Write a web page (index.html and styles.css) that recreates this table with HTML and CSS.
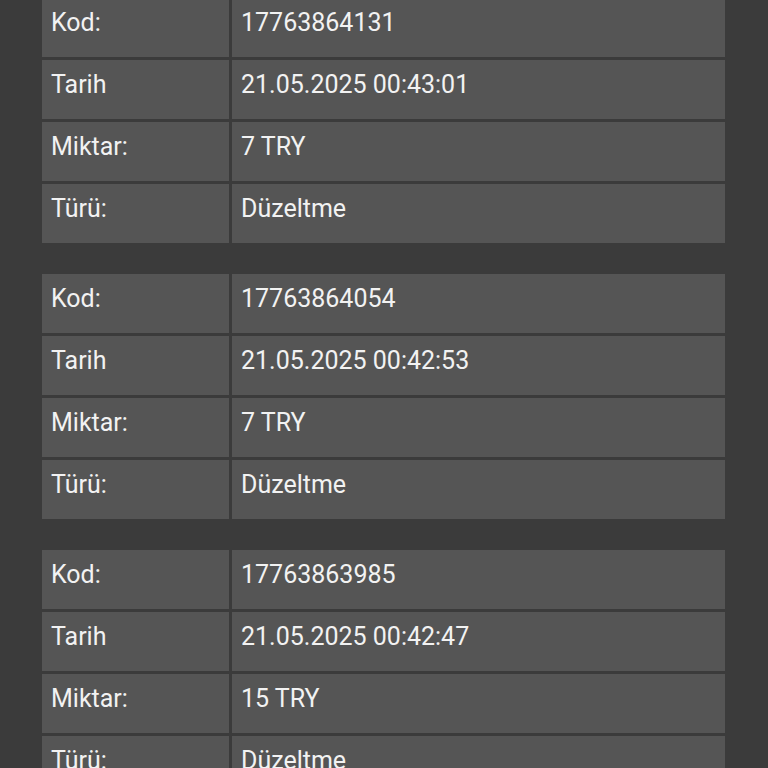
FILE: index.html
```html
<!DOCTYPE html>
<html lang="tr">
<head>
  <meta charset="UTF-8">
  <meta name="viewport" content="width=device-width, initial-scale=1.0">
  <title>İşlem Geçmişi</title>
  <link rel="stylesheet" href="styles.css">
</head>
<body>
  <div class="history">
    <table class="record">
      <tr><td class="label">Kod:</td><td>17763864131</td></tr>
      <tr><td class="label">Tarih</td><td>21.05.2025 00:43:01</td></tr>
      <tr><td class="label">Miktar:</td><td>7 TRY</td></tr>
      <tr><td class="label">Türü:</td><td>Düzeltme</td></tr>
    </table>

    <table class="record">
      <tr><td class="label">Kod:</td><td>17763864054</td></tr>
      <tr><td class="label">Tarih</td><td>21.05.2025 00:42:53</td></tr>
      <tr><td class="label">Miktar:</td><td>7 TRY</td></tr>
      <tr><td class="label">Türü:</td><td>Düzeltme</td></tr>
    </table>

    <table class="record">
      <tr><td class="label">Kod:</td><td>17763863985</td></tr>
      <tr><td class="label">Tarih</td><td>21.05.2025 00:42:47</td></tr>
      <tr><td class="label">Miktar:</td><td>15 TRY</td></tr>
      <tr><td class="label">Türü:</td><td>Düzeltme</td></tr>
    </table>
  </div>
</body>
</html>
```

FILE: styles.css
```css
body {
  margin: 0;
  background: #3b3b3b;
  font-family: Roboto, 'Noto Sans', sans-serif;
  color: #f2f2f2;
  overflow: hidden;
}

.history {
  margin-top: -5px;
}

.record {
  border-collapse: separate;
  border-spacing: 3px;
  table-layout: fixed;
  width: 689px;
  margin: 0 0 25px 39px;
}

.record td {
  background: #555555;
  height: 59px;
  box-sizing: border-box;
  padding: 10px 9px 0;
  vertical-align: top;
  font-size: 25px;
  line-height: 29px;
}

.record td.label {
  width: 187px;
}
```
